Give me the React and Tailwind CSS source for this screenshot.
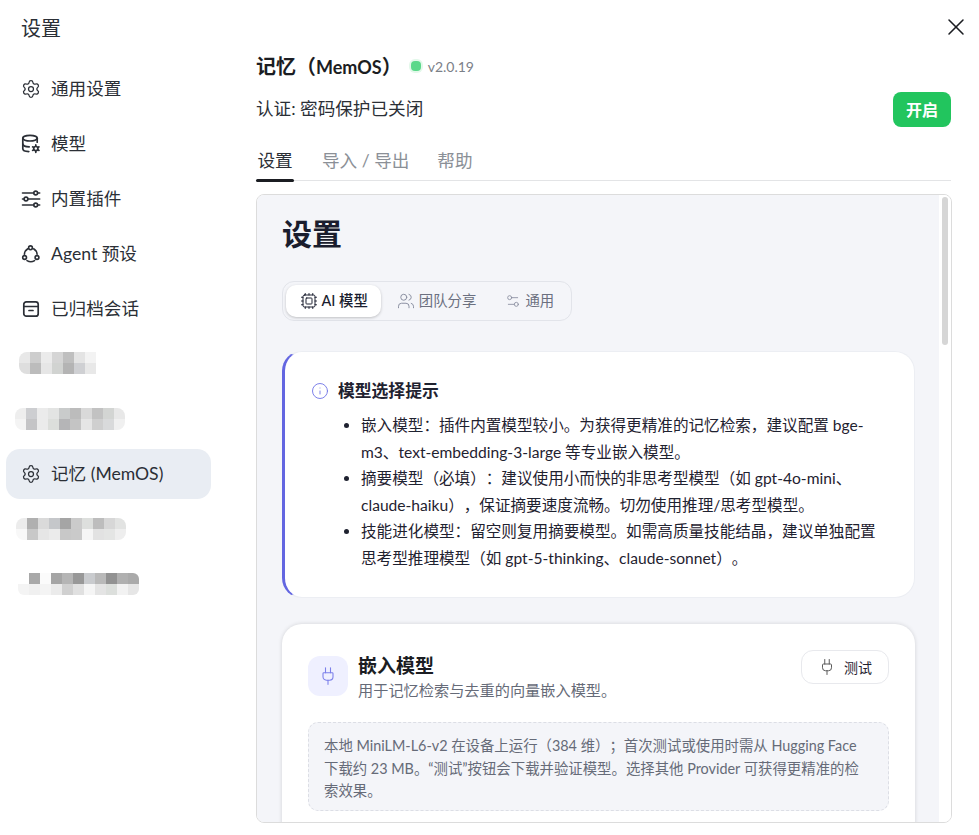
import React from "react";
import { Settings, Settings2, X, Cpu, Users, Plug, Info } from "lucide-react";

function DbCog() {
  return (
    <svg width="20" height="20" viewBox="0 0 20 20" fill="none" stroke="currentColor" strokeWidth="1.7" strokeLinecap="round" strokeLinejoin="round">
      <ellipse cx="9" cy="4.2" rx="7.2" ry="2.8" />
      <path d="M1.8 4.2v10.6c0 1.5 2.6 2.7 6 2.8" />
      <path d="M1.8 10c0 1.5 2.8 2.8 6.4 2.8" />
      <path d="M16.2 4.2v4" />
      <circle cx="14.8" cy="14.6" r="2.1" />
      <path d="M14.8 10.9v1.3M14.8 17v1.3M11.6 12.8l1.1.6M16.9 15.8l1.1.6M11.6 16.4l1.1-.6M16.9 13.4l1.1-.6" />
    </svg>
  );
}

function Sliders3() {
  return (
    <svg width="20" height="20" viewBox="0 0 20 20" fill="none" stroke="currentColor" strokeWidth="1.6" strokeLinecap="round">
      <path d="M1.5 4h11.2M16.7 4h2" />
      <circle cx="14.7" cy="4" r="1.9" />
      <path d="M1.5 10h1.6M7 10h11.7" />
      <circle cx="5" cy="10" r="1.9" />
      <path d="M1.5 16h11.2M16.7 16h2" />
      <circle cx="14.7" cy="16" r="1.9" />
    </svg>
  );
}

function AgentIcon() {
  return (
    <svg width="20" height="20" viewBox="0 0 20 20" fill="none" stroke="currentColor" strokeWidth="1.6" strokeLinecap="round">
      <circle cx="9.5" cy="3.8" r="1.9" />
      <circle cx="3.6" cy="13.5" r="1.9" />
      <circle cx="16" cy="13.5" r="1.9" />
      <path d="M6.8 4.8C4.8 6 3.6 8 3.4 10.2" />
      <path d="M12.6 4.8c2 1.2 3.3 3.2 3.5 5.4" />
      <path d="M6 16.6c2.4 1.4 5.2 1.4 7.6 0" />
    </svg>
  );
}

function ArchiveIcon() {
  return (
    <svg width="20" height="20" viewBox="0 0 20 20" fill="none" stroke="currentColor" strokeWidth="1.7" strokeLinecap="round" strokeLinejoin="round">
      <rect x="2.8" y="2.8" width="14.4" height="14.4" rx="2.5" />
      <path d="M2.8 7.5h14.4M8 11.5h4" />
    </svg>
  );
}

function Mosaic({ className, rows }) {
  return (
    <div className={`flex flex-col overflow-hidden ${className}`}>
      {rows.map((row, i) => (
        <div key={i} className="flex h-[11px]">
          {row.map((c, j) => (
            <div key={j} className="h-full w-[11px] shrink-0" style={{ backgroundColor: c }} />
          ))}
        </div>
      ))}
    </div>
  );
}

function NavItem({ icon, label, active }) {
  return (
    <div className={`flex h-[50px] w-[205px] items-center gap-[10px] rounded-[14px] pl-[15px] text-[17.6px] text-[#2b2f36] ${active ? "bg-[#e9edf3]" : ""}`}>
      <span className="flex w-[20px] shrink-0 justify-center">{icon}</span>
      <span>{label}</span>
    </div>
  );
}

function MosaicRow({ children }) {
  return <div className="flex h-[50px] w-[205px] items-center">{children}</div>;
}

function Segment({ icon, label, active }) {
  return (
    <div className={`flex h-[32px] items-center gap-[4px] rounded-[10px] px-[13.5px] text-[14.4px] ${active ? "bg-white font-medium text-[#1a1d2e] shadow-[0_1px_3px_rgba(0,0,0,0.22)]" : "text-[#6b7080]"}`}>
      {icon}
      <span>{label}</span>
    </div>
  );
}

export default function App() {
  return (
    <div className="relative flex h-[835px] w-[979px] overflow-hidden bg-white [font-family:Lato,'Noto_Sans_CJK_SC',sans-serif] [text-spacing-trim:space-all]">
      <aside className="w-[256px] shrink-0 pl-[6px]">
        <div className="pb-[22px] pl-[15px] pt-[14px] text-[20px] leading-[28px] text-[#2b2f36]">设置</div>
        <div className="flex flex-col gap-[5px] pt-0">
          <NavItem label="通用设置" icon={<Settings size={24} strokeWidth={1.5} />} />
          <NavItem label="模型" icon={<DbCog />} />
          <NavItem label="内置插件" icon={<Sliders3 />} />
          <NavItem label="Agent 预设" icon={<AgentIcon />} />
          <NavItem label="已归档会话" icon={<ArchiveIcon />} />
          <MosaicRow>
            <Mosaic className="-mt-[2px] ml-[13px] rounded-l-[8px]" rows={[
              ["#e8e8e8", "#cdcdcd", "#ebebeb", "#d5d5d5", "#bfbfbf", "#e4e4e4", "#f3f3f3"],
              ["#dedede", "#bcbcbc", "#e6e6e6", "#d1d3d1", "#b4b4b4", "#cfd0d3", "#e8e8e8"],
            ]} />
          </MosaicRow>
          <MosaicRow>
            <Mosaic className="ml-[9px] rounded-[8px]" rows={[
              ["#eeeeee", "#cdced1", "#ebebeb", "#e3e4e3", "#c9cbcb", "#bcbcbc", "#d9d9d9", "#c2c2c2", "#d3d5d3", "#e8e8e8"],
              ["#f4f4f4", "#c4c4c6", "#ebebeb", "#dcdedb", "#b5b5b7", "#c4c4c4", "#e5e5e5", "#cfcfcf", "#d9dadb", "#f0f0f0"],
            ]} />
          </MosaicRow>
          <NavItem active label="记忆 (MemOS)" icon={<Settings size={24} strokeWidth={1.5} />} />
          <MosaicRow>
            <Mosaic className="ml-[10px] rounded-[8px]" rows={[
              ["#ececec", "#b0b0b0", "#dadada", "#c5c7ca", "#a5a5a5", "#cbcbcb", "#dddfdd", "#bdbdbd", "#d7d7d7", "#e2e3e2"],
              ["#f8f8f8", "#c8c8c8", "#e6e6e6", "#ebebeb", "#c8c8c8", "#cacaca", "#f5f5f5", "#e2e2e2", "#e4e5e4", "#eeeeee"],
            ]} />
          </MosaicRow>
          <MosaicRow>
            <Mosaic className="ml-[12px] rounded-[6px]" rows={[
              ["#ffffff", "#a8a8a8", "#fbfbfb", "#a5a5a5", "#b5b5b5", "#989898", "#c9cbce", "#b9b9b9", "#929292", "#b0b0b0", "#aaaaaa"],
              ["#f4f4f4", "#f0f0f0", "#f4f4f4", "#ebebeb", "#d0d0d0", "#e0e0e0", "#f5f5f5", "#e4e4e4", "#dcdfdc", "#f2f2f2", "#e6e6e6"],
            ]} />
          </MosaicRow>
        </div>
      </aside>

      <main className="flex h-[823px] w-[696px] shrink-0 flex-col pt-[52px]">
        <div className="flex h-[28px] items-center">
          <h1 className="text-[20px] font-bold leading-[28px] text-[#1b1d22]">记忆（<span className="text-[18px]">MemOS</span>）</h1>
          <span className="ml-[9px] block h-[10px] w-[10px] rounded-[4px] bg-[#5bd88a] shadow-[0_0_0_2px_#e3f8ea]" />
          <span className="ml-[7px] text-[14px] text-[#7b8088]">v2.0.19</span>
        </div>
        <div className="mr-[1px] mt-[12px] flex h-[35px] items-center justify-between">
          <span className="text-[17.6px] text-[#2b2f36]">认证: 密码保护已关闭</span>
          <button className="flex h-[35px] w-[58px] items-center justify-center rounded-[8px] bg-[#22c55e] text-[16px] font-bold text-white">开启</button>
        </div>
        <div className="mr-[1px] mt-[15px] flex h-[39px] gap-[28px] border-b border-[#e3e4e6] text-[17.6px]">
          <div className="relative w-[38px] pt-[5px] text-center leading-[28px] text-[#2b2f36]">
            设置
            <div className="absolute -bottom-[2px] left-0 h-[3px] w-full rounded-sm bg-[#1b1d22]" />
          </div>
          <div className="pt-[5px] leading-[28px] text-[#8b9097]">导入 / 导出</div>
          <div className="pt-[5px] leading-[28px] text-[#8b9097]">帮助</div>
        </div>

        <div className="mt-[13px] flex min-h-0 flex-1 overflow-hidden rounded-[8px] border border-[#dcdcdc]">
          <div className="min-w-0 flex-1 overflow-hidden bg-[#f4f5f9] pl-[25px] pr-[24px]">
            <h2 className="pt-[14px] text-[30px] font-bold leading-[48px] text-[#1a1d2e]">设置</h2>
            <div className="mt-[24px] inline-flex h-[40px] items-center gap-[2px] rounded-[12px] border border-[#e2e4ea] px-[3px]">
              <Segment active label="AI 模型" icon={<Cpu size={18} strokeWidth={1.3} />} />
              <Segment label="团队分享" icon={<Users size={18} strokeWidth={1.3} className="text-[#8a8fa0]" />} />
              <Segment label="通用" icon={<Settings2 size={16} strokeWidth={1.3} className="text-[#8a8fa0]" />} />
            </div>

            <section className="mt-[30px] h-[247px] rounded-[20px] border border-l-[3px] border-[#eceef3] border-l-[#6366e1] bg-white pl-[26px] pr-[24px] pt-[26px]">
              <div className="flex h-[26px] items-center gap-[9px] text-[16.8px] font-bold text-[#1f2230]">
                <Info size={18} strokeWidth={1.2} className="text-[#6f74e6]" />
                <span>模型选择提示</span>
              </div>
              <ul className="ml-[23px] mt-[8px] list-disc pl-[27px] text-[15.6px] leading-[26.5px] text-[#1f2230]">
                <li>嵌入模型：插件内置模型较小。为获得更精准的记忆检索，建议配置 bge-m3、text-embedding-3-large 等专业嵌入模型。</li>
                <li>摘要模型（必填）：建议使用小而快的非思考型模型（如 gpt-4o-mini、claude-haiku），保证摘要速度流畅。切勿使用推理/思考型模型。</li>
                <li>技能进化模型：留空则复用摘要模型。如需高质量技能结晶，建议单独配置思考型推理模型（如 gpt-5-thinking、claude-sonnet）。</li>
              </ul>
            </section>

            <section className="mt-[26px] h-[300px] rounded-[20px] bg-white px-[26px] pt-[26px] shadow-[0_0_4px_rgba(0,0,0,0.14)]">
              <div className="flex items-start justify-between">
                <div className="flex gap-[10px] pt-[6px]">
                  <div className="flex h-[40px] w-[40px] items-center justify-center rounded-[12px] bg-[#eff0ff]">
                    <Plug size={20} strokeWidth={1.3} className="text-[#7c80ea]" />
                  </div>
                  <div className="-mt-[3px]">
                    <div className="text-[19px] font-bold leading-[26px] text-[#1b1d22]">嵌入模型</div>
                    <div className="text-[15.2px] leading-[22px] text-[#666b78]">用于记忆检索与去重的向量嵌入模型。</div>
                  </div>
                </div>
                <button className="flex h-[34px] w-[88px] items-center justify-center gap-[8px] rounded-[12px] border border-[#e8e9ed] bg-white text-[14px] text-[#1f2230]">
                  <Plug size={18} strokeWidth={1.3} className="text-[#555]" />
                  <span>测试</span>
                </button>
              </div>
              <div className="mt-[21px] h-[89px] rounded-[10px] border border-dashed border-[#dcdee5] bg-[#f4f5f9] px-[15px] pt-[12px] text-[14.4px] leading-[22.5px] text-[#666b78]">
                本地 MiniLM-L6-v2 在设备上运行（384 维）；首次测试或使用时需从 Hugging Face 下载约 23 MB。“测试”按钮会下载并验证模型。选择其他 Provider 可获得更精准的检索效果。
              </div>
            </section>
          </div>
          <div className="relative w-[12px] shrink-0 bg-white">
            <div className="absolute left-[3px] top-[2px] h-[148px] w-[6px] rounded-full bg-[#d6d6d6]" />
          </div>
        </div>
      </main>

      <button className="absolute left-[942px] top-[13px] text-[#1b1d22]">
        <X size={28} strokeWidth={1.3} />
      </button>
    </div>
  );
}
